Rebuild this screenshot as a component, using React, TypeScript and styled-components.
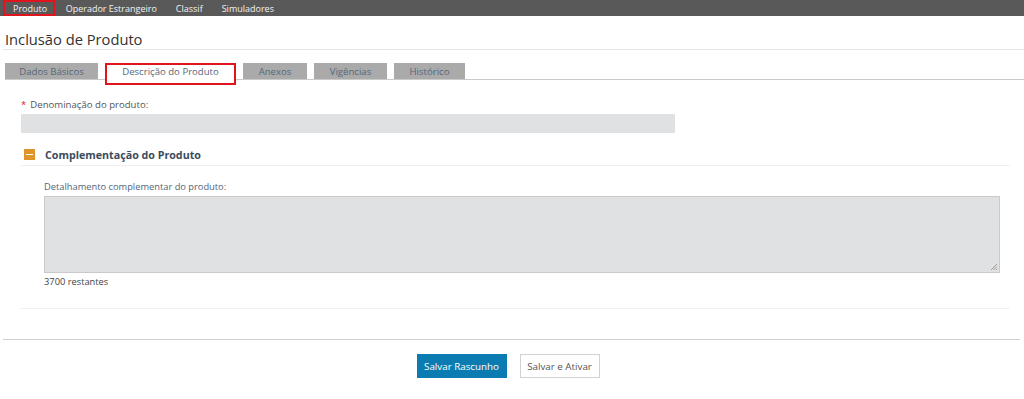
import styled, { createGlobalStyle } from 'styled-components';

const GlobalStyle = createGlobalStyle`
  body {
    margin: 0;
    background: #fff;
    font-family: 'Open Sans', 'Liberation Sans', sans-serif;
    color: #555;
  }
`;

const TopNav = styled.nav`
  display: flex;
  height: 16px;
  background-color: #595959;
  padding-left: 3px;
`;

const NavItem = styled.div<{ active?: boolean }>`
  display: flex;
  align-items: center;
  padding: 0 ${(p) => (p.active ? '6px 0 8px' : '9.5px')};
  font-size: 9px;
  color: #f2f2f2;
  border: 2px solid ${(p) => (p.active ? '#e0141c' : 'transparent')};
  border-width: ${(p) => (p.active ? '2px' : '0')};
  margin-right: ${(p) => (p.active ? '1px' : '0')};
  box-sizing: border-box;
  height: 16px;
`;

const PageTitle = styled.h1`
  margin: 0 0 0 3px;
  padding: 13px 0 0 2px;
  font-size: 14.7px;
  font-weight: 400;
  color: #333;
  height: 20px;
  line-height: 20px;
  border-bottom: 1px solid #e8e8e8;
`;

const TabBar = styled.div`
  display: flex;
  gap: 7px;
  margin-left: 5px;
  padding-top: 13px;
  border-bottom: 1px solid #c9c9c9;
`;

const Tab = styled.div<{ active?: boolean; w: number }>`
  width: ${(p) => p.w}px;
  height: 16px;
  box-sizing: border-box;
  display: flex;
  align-items: center;
  justify-content: center;
  font-size: 9.6px;
  color: #56677a;
  background-color: ${(p) => (p.active ? '#fff' : '#aaaaaa')};
  border: ${(p) => (p.active ? '2px solid #e0141c' : 'none')};
  ${(p) => (p.active ? 'height: 22px; margin-bottom: -6px; padding-bottom: 5px;' : '')}
`;

const Content = styled.div`
  padding: 18px 14px 0 21px;
`;

const Label = styled.div`
  font-size: 9.6px;
  color: #555;
  line-height: 14px;
`;

const Star = styled.span`
  color: #e0141c;
  margin-right: 4px;
`;

const NameInput = styled.div`
  margin-top: 2px;
  width: 654px;
  height: 19px;
  background-color: #e0e1e2;
`;

const Section = styled.div`
  margin-top: 15px;
  border-bottom: 1px solid #f0f0f0;
  padding-bottom: 19px;
`;

const SectionHeader = styled.div`
  display: flex;
  align-items: center;
  gap: 10px;
  height: 13px;
  padding-left: 3px;
  padding-bottom: 4px;
  border-bottom: 1px solid #f0f0f0;
`;

const Toggle = styled.div`
  width: 11px;
  height: 11px;
  background-color: #e0952a;
  display: flex;
  align-items: center;
  justify-content: center;
  &::after {
    content: '';
    width: 7px;
    height: 1px;
    background: #fff;
  }
`;

const SectionTitle = styled.div`
  font-size: 10.7px;
  font-weight: 700;
  color: #3b4b5e;
`;

const SectionBody = styled.div`
  padding: 14px 10px 0 23px;
`;

const BlueLabel = styled(Label)`
  font-size: 9.3px;
  color: #52647a;
`;

const TextArea = styled.div`
  position: relative;
  margin-top: 2px;
  width: 956px;
  height: 77px;
  box-sizing: border-box;
  background-color: #e0e1e2;
  border: 1px solid #cacaca;
`;

const Grip = styled.svg`
  position: absolute;
  right: 1px;
  bottom: 1px;
`;

const Counter = styled.div`
  margin-top: 2px;
  font-size: 9.3px;
  line-height: 14px;
  color: #444;
`;

const Footer = styled.div`
  margin: 30px 4px 0 3px;
  border-top: 1px solid #cfcfcf;
  display: flex;
  justify-content: center;
  gap: 13px;
  padding: 14px 7px 0 0;
`;

const Button = styled.button<{ primary?: boolean }>`
  font-family: 'Open Sans', 'Liberation Sans', sans-serif;
  font-size: 9.8px;
  height: 24px;
  box-sizing: border-box;
  width: ${(p) => (p.primary ? '90px' : '80px')};
  padding: 0;
  border: 1px solid ${(p) => (p.primary ? '#0a7cb1' : '#d2d2d2')};
  background-color: ${(p) => (p.primary ? '#0a7cb1' : '#fff')};
  color: ${(p) => (p.primary ? '#fff' : '#555')};
  border-radius: 0;
`;

const tabs = [
  { label: 'Dados Básicos', w: 93 },
  { label: 'Descrição do Produto', w: 131, active: true },
  { label: 'Anexos', w: 64 },
  { label: 'Vigências', w: 73 },
  { label: 'Histórico', w: 71 },
];

export default function App() {
  return (
    <>
      <GlobalStyle />
      <TopNav>
        <NavItem active>Produto</NavItem>
        <NavItem>Operador Estrangeiro</NavItem>
        <NavItem>Classif</NavItem>
        <NavItem>Simuladores</NavItem>
      </TopNav>
      <PageTitle>Inclusão de Produto</PageTitle>
      <TabBar>
        {tabs.map((t) => (
          <Tab key={t.label} w={t.w} active={t.active}>
            {t.label}
          </Tab>
        ))}
      </TabBar>
      <Content>
        <Label>
          <Star>*</Star>Denominação do produto:
        </Label>
        <NameInput />
        <Section>
          <SectionHeader>
            <Toggle />
            <SectionTitle>Complementação do Produto</SectionTitle>
          </SectionHeader>
          <SectionBody>
            <BlueLabel>Detalhamento complementar do produto:</BlueLabel>
            <TextArea>
              <Grip width="9" height="9" viewBox="0 0 9 9">
                <path d="M8 2L2 8M8 4.5L4.5 8M8 7L7 8" stroke="#888" strokeWidth="0.8" />
              </Grip>
            </TextArea>
            <Counter>3700 restantes</Counter>
          </SectionBody>
        </Section>
      </Content>
      <Footer>
        <Button primary>Salvar Rascunho</Button>
        <Button>Salvar e Ativar</Button>
      </Footer>
    </>
  );
}
